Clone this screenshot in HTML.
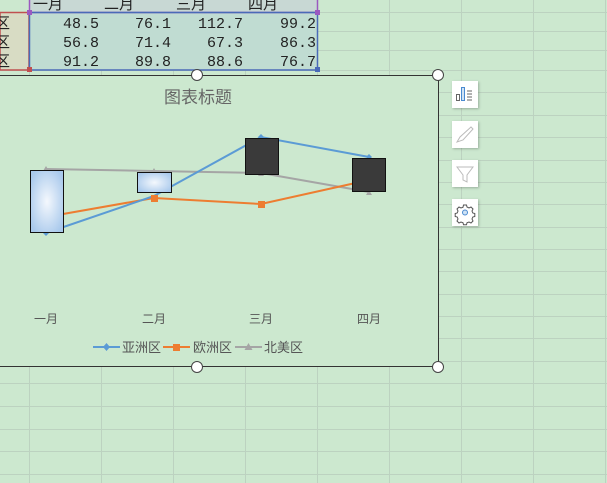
<!DOCTYPE html>
<html><head><meta charset="utf-8"><style>
html,body{margin:0;padding:0;width:607px;height:483px;overflow:hidden;background:#cce8cf}
svg{display:block}
text{font-family:"Liberation Sans","Noto Sans CJK SC",sans-serif}
.m text{font-family:"Liberation Mono","Noto Sans CJK SC",monospace;font-size:15px;fill:#222}
</style></head><body>
<svg width="607" height="483" viewBox="0 0 607 483" xmlns="http://www.w3.org/2000/svg">
<defs>
<radialGradient id="g" cx="0.5" cy="0.5" r="0.6"><stop offset="0" stop-color="#f4f8fd"/><stop offset="1" stop-color="#a9c9ec"/></radialGradient>
<filter id="sh" x="-20%" y="-20%" width="150%" height="150%"><feDropShadow dx="1" dy="1" stdDeviation="1.2" flood-color="#000" flood-opacity="0.25"/></filter>
</defs>
<g stroke="#bcd2c0" stroke-width="1">
<line x1="29.5" y1="0" x2="29.5" y2="483"/><line x1="101.5" y1="0" x2="101.5" y2="483"/><line x1="173.5" y1="0" x2="173.5" y2="483"/><line x1="245.5" y1="0" x2="245.5" y2="483"/><line x1="317.5" y1="0" x2="317.5" y2="483"/><line x1="389.5" y1="0" x2="389.5" y2="483"/><line x1="461.5" y1="0" x2="461.5" y2="483"/><line x1="533.5" y1="0" x2="533.5" y2="483"/><line x1="605.5" y1="0" x2="605.5" y2="483"/>
<line x1="0" y1="12.5" x2="607" y2="12.5"/><line x1="0" y1="31.5" x2="607" y2="31.5"/><line x1="0" y1="50.5" x2="607" y2="50.5"/><line x1="0" y1="70.5" x2="607" y2="70.5"/>
<line x1="0" y1="92.5" x2="607" y2="92.5"/><line x1="0" y1="115.5" x2="607" y2="115.5"/><line x1="0" y1="137.5" x2="607" y2="137.5"/><line x1="0" y1="160.5" x2="607" y2="160.5"/><line x1="0" y1="182.5" x2="607" y2="182.5"/><line x1="0" y1="204.5" x2="607" y2="204.5"/><line x1="0" y1="227.5" x2="607" y2="227.5"/><line x1="0" y1="249.5" x2="607" y2="249.5"/><line x1="0" y1="271.5" x2="607" y2="271.5"/><line x1="0" y1="294.5" x2="607" y2="294.5"/><line x1="0" y1="316.5" x2="607" y2="316.5"/><line x1="0" y1="338.5" x2="607" y2="338.5"/><line x1="0" y1="361.5" x2="607" y2="361.5"/><line x1="0" y1="383.5" x2="607" y2="383.5"/><line x1="0" y1="406.5" x2="607" y2="406.5"/><line x1="0" y1="429.5" x2="607" y2="429.5"/><line x1="0" y1="451.5" x2="607" y2="451.5"/><line x1="0" y1="474.5" x2="607" y2="474.5"/>
</g>
<rect x="0" y="12" width="29" height="58" fill="#d8dcc4"/>
<rect x="30" y="12" width="287" height="58" fill="#c0dcd2"/>
<rect x="30" y="0" width="287" height="12" fill="#c8d8d4"/>
<rect x="0" y="12.5" width="29" height="57.5" fill="none" stroke="#c05050" stroke-width="1.5"/>
<rect x="29.5" y="-2" width="288" height="14.5" fill="none" stroke="#9b59c0" stroke-width="1.5"/>
<rect x="29.5" y="12.5" width="288" height="57.5" fill="none" stroke="#4a6ab8" stroke-width="1.5"/>
<rect x="27" y="10" width="5" height="5" fill="#9b59c0"/><rect x="315" y="10" width="5" height="5" fill="#9b59c0"/>
<rect x="27" y="67" width="5" height="5" fill="#c05050"/><rect x="315" y="67" width="5" height="5" fill="#4a6ab8"/>
<g class="m">
<text x="33" y="9">一月</text><text x="104" y="9">二月</text><text x="176" y="9">三月</text><text x="248" y="9">四月</text>
<text x="-5" y="28">区</text><text x="-5" y="47">区</text><text x="-5" y="66">区</text>
<g text-anchor="end">
<text x="99" y="28">48.5</text><text x="171" y="28">76.1</text><text x="243" y="28">112.7</text><text x="316" y="28">99.2</text>
<text x="99" y="47">56.8</text><text x="171" y="47">71.4</text><text x="243" y="47">67.3</text><text x="316" y="47">86.3</text>
<text x="99" y="66">91.2</text><text x="171" y="66">89.8</text><text x="243" y="66">88.6</text><text x="316" y="66">76.7</text>
</g></g>
<rect x="-5" y="75.5" width="443.5" height="291" fill="#cce8cf" stroke="#333" stroke-width="1"/>
<text x="198" y="103" font-size="17" fill="#666" text-anchor="middle">图表标题</text>
<g stroke-width="2" fill="none">
<polyline points="46,169 154,171 261,173 369,192" stroke="#a5a5a5"/>
<polyline points="46,217 154,198 261,204 369,180" stroke="#ed7d31"/>
<polyline points="46,233 154,196 261,137 369,157" stroke="#5b9bd5"/>
</g>
<g fill="#a5a5a5"><path d="M46 166l3 5h-6z"/><path d="M154 168l3 5h-6z"/><path d="M261 171l3 5h-6z"/><path d="M369 190l3 5h-6z"/></g>
<g fill="#5b9bd5"><path d="M46 230l3 3-3 3-3-3z"/><path d="M261 134l3 3-3 3-3-3z"/><path d="M369 154l3 3-3 3-3-3z"/></g>
<rect x="151" y="195" width="7" height="7" fill="#ed7d31"/><rect x="258" y="201" width="7" height="7" fill="#ed7d31"/>
<rect x="30.5" y="170.5" width="33" height="62" fill="url(#g)" stroke="#111"/>
<rect x="137.5" y="172.5" width="34" height="20" fill="url(#g)" stroke="#111"/>
<rect x="245.5" y="138.5" width="33" height="36" fill="#3a3a3a" stroke="#111"/>
<rect x="352.5" y="158.5" width="33" height="33" fill="#3a3a3a" stroke="#111"/>
<g font-size="12" fill="#555" text-anchor="middle">
<text x="46" y="323">一月</text><text x="154" y="323">二月</text><text x="261" y="323">三月</text><text x="369" y="323">四月</text>
</g>
<g stroke-width="2">
<line x1="93" y1="347" x2="120" y2="347" stroke="#5b9bd5"/><line x1="163" y1="347" x2="190" y2="347" stroke="#ed7d31"/><line x1="235" y1="347" x2="262" y2="347" stroke="#a5a5a5"/>
</g>
<path d="M106.5 343l3.5 4-3.5 4-3.5-4z" fill="#5b9bd5"/>
<rect x="173" y="344" width="7" height="7" fill="#ed7d31"/>
<path d="M248.5 343l4 7h-8z" fill="#a5a5a5"/>
<g font-size="13" fill="#555"><text x="122" y="352">亚洲区</text><text x="193" y="352">欧洲区</text><text x="264" y="352">北美区</text></g>
<g fill="#fff" stroke="#444" stroke-width="1">
<circle cx="197" cy="75" r="5.5"/><circle cx="438" cy="75" r="5.5"/><circle cx="197" cy="367" r="5.5"/><circle cx="438" cy="367" r="5.5"/>
</g>
<g filter="url(#sh)" fill="#fff">
<rect x="452" y="81" width="26" height="27"/><rect x="452" y="121" width="26" height="27"/><rect x="452" y="160" width="26" height="27"/><rect x="452" y="199" width="26" height="27"/>
</g>
<g fill="none" stroke-width="1">
<rect x="456.5" y="94.5" width="3" height="6" stroke="#666"/><rect x="461.5" y="87.5" width="3" height="13" stroke="#4a8ad0" fill="#cfe2f5"/>
<path d="M467 91h5M467 94h5M467 97h5M467 100h5" stroke="#666"/>
<path d="M457 142l3-5 11-10 2 2-10 11z" stroke="#bbb"/>
<path d="M457 167h16l-6 8v7l-4-2v-5z" stroke="#bbb"/>
<circle cx="465" cy="212.5" r="2.5" stroke="#4a8ad0" fill="#cfe2f5"/>
<path d="M463.5 205h3l.5 2 2 1 2-1 2 2-1 2 .8 2 2 .5v3l-2 .5-.8 2 1 2-2 2-2-1-2 .8-.5 2h-3l-.5-2-2-.8-2 1-2-2 1-2-.8-2-2-.5v-3l2-.5.8-2-1-2 2-2 2 1 2-.8z" stroke="#555"/>
</g>
</svg>
</body></html>
